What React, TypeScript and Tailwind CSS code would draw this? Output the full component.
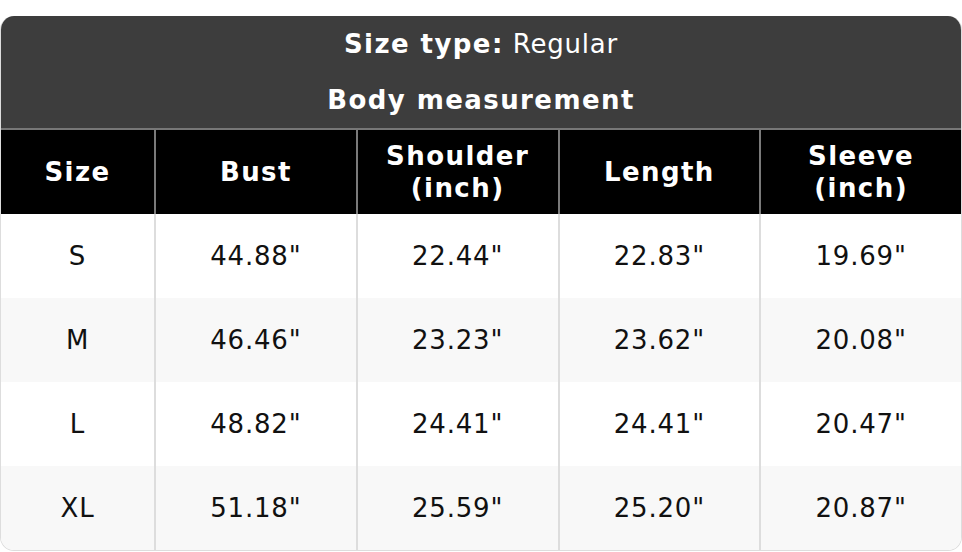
import React from 'react';

const rows = [
  ['S', '44.88"', '22.44"', '22.83"', '19.69"'],
  ['M', '46.46"', '23.23"', '23.62"', '20.08"'],
  ['L', '48.82"', '24.41"', '24.41"', '20.47"'],
  ['XL', '51.18"', '25.59"', '25.20"', '20.87"'],
];

const App: React.FC = () => {
  return (
    <div className="bg-white pt-4 w-[962px] tracking-wider" style={{ fontFamily: '"DejaVu Sans", sans-serif' }}>
      <div className="rounded-[14px] overflow-hidden border border-[#dddddd] border-t-0">
        <div className="bg-[#3d3d3d] text-white text-center h-[112px] flex flex-col">
          <div className="h-[56px] flex items-center justify-center text-[26px]">
            <span className="font-bold tracking-[0.055em]">Size type:</span>
            <span className="ml-[9px]">Regular</span>
          </div>
          <div className="h-[56px] flex items-center justify-center text-[26px] font-bold tracking-[0.055em]">Body measurement</div>
        </div>
        <div className="grid grid-cols-[153px_1fr_1fr_1fr_1fr] bg-black text-white font-bold tracking-[0.055em] text-[26px] leading-[32px] border-t-2 border-[#777777] h-[86px]">
          {['Size', 'Bust', 'Shoulder\n(inch)', 'Length', 'Sleeve\n(inch)'].map((h, i) => (
            <div
              key={h}
              className={`flex items-center justify-center text-center whitespace-pre ${i > 0 ? 'border-l-2 border-[#7a7a7a]' : ''}`}
            >
              {h}
            </div>
          ))}
        </div>
        {rows.map((r, ri) => (
          <div
            key={r[0]}
            className={`grid grid-cols-[153px_1fr_1fr_1fr_1fr] h-[84px] text-[26px] text-[#111111] ${ri % 2 ? 'bg-[#f8f8f8]' : 'bg-white'}`}
          >
            {r.map((c, ci) => (
              <div
                key={ci}
                className={`flex items-center justify-center ${ci > 0 ? 'border-l-2 border-[#dddddd]' : ''}`}
              >
                {c}
              </div>
            ))}
          </div>
        ))}
      </div>
    </div>
  );
};

export default App;
